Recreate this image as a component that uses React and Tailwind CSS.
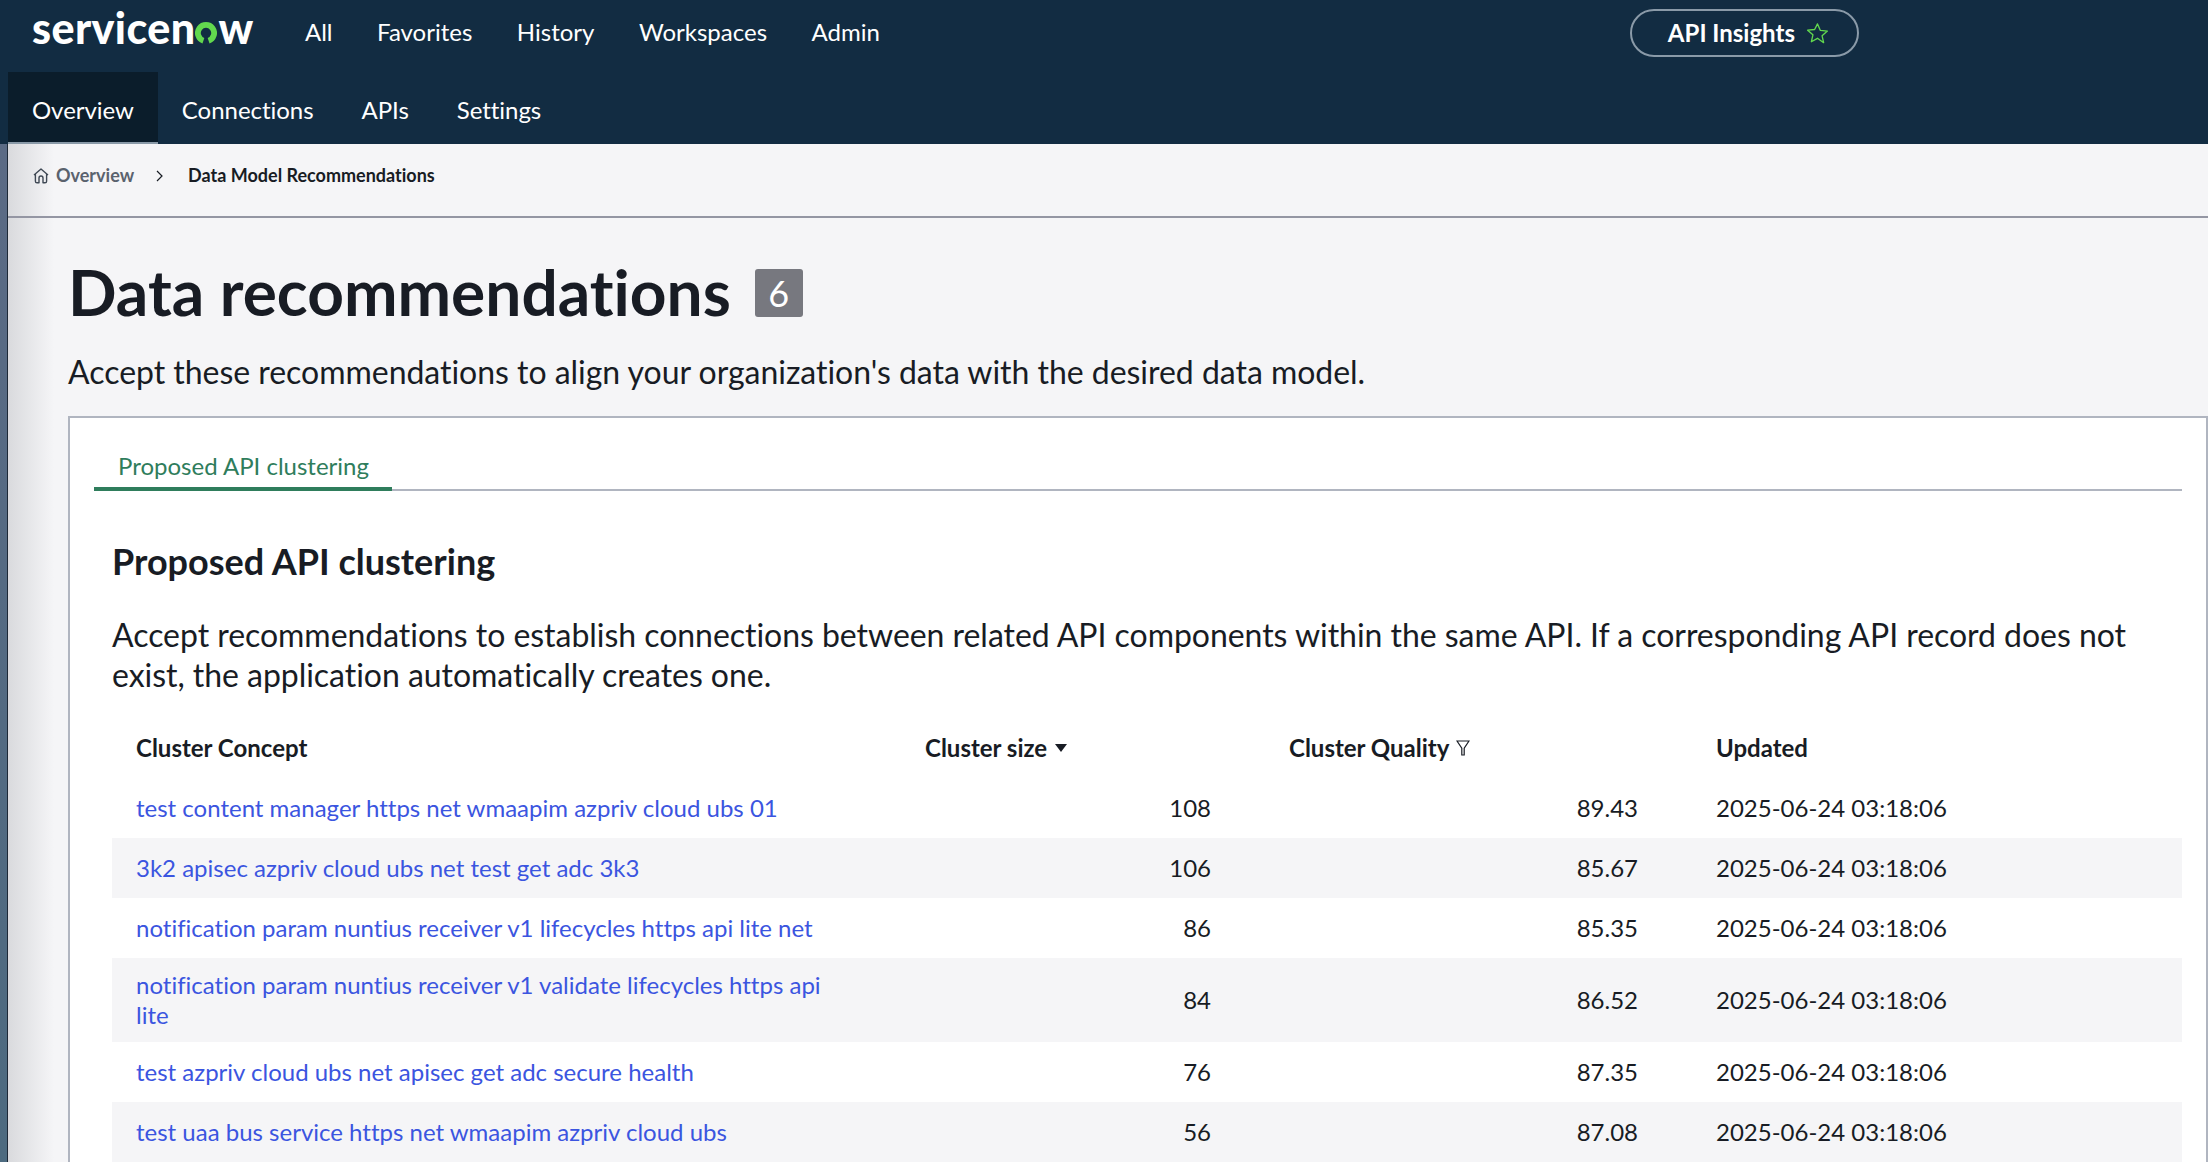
import React from "react";

const mainNav = ["All", "Favorites", "History", "Workspaces", "Admin"];
const subNav = ["Overview", "Connections", "APIs", "Settings"];

const rows = [
  { name: "test content manager https net wmaapim azpriv cloud ubs 01", size: 108, quality: "89.43" },
  { name: "3k2 apisec azpriv cloud ubs net test get adc 3k3", size: 106, quality: "85.67" },
  { name: "notification param nuntius receiver v1 lifecycles https api lite net", size: 86, quality: "85.35" },
  { name: "notification param nuntius receiver v1 validate lifecycles https api lite", size: 84, quality: "86.52" },
  { name: "test azpriv cloud ubs net apisec get adc secure health", size: 76, quality: "87.35" },
  { name: "test uaa bus service https net wmaapim azpriv cloud ubs", size: 56, quality: "87.08" },
];

function Logo() {
  return (
    <div className="flex items-baseline font-['Lato',sans-serif] text-[43px] leading-[44px] font-black tracking-[0.4px] text-white">
      <span>servicen</span>
      <svg viewBox="0 0 22 22" className="mr-[1px] mb-[6px] h-[22px] w-[22px] self-end">
        <path d="M8.4 18.7A8.1 8.1 0 1 1 13.6 18.7" fill="none" stroke="#62d84e" strokeWidth="5.8" />
      </svg>
      <span>w</span>
    </div>
  );
}

function HomeIcon() {
  return (
    <svg viewBox="0 0 16 16" className="h-4 w-4" fill="none" stroke="#3f4854" strokeWidth="1.4" strokeLinejoin="round">
      <path d="M1 7 8 1l7 6M2.4 6v7.2a1.6 1.6 0 0 0 1.6 1.6h2V10a2 2 0 0 1 4 0v4.8h2a1.6 1.6 0 0 0 1.6-1.6V6" />
    </svg>
  );
}

export default function App() {
  return (
    <div className="h-[1162px] w-[2208px] overflow-hidden bg-[#f5f5f7] font-['Lato',sans-serif] text-[#181c24] [font-variant-ligatures:none]">
      <header className="h-[144px] bg-[#122c42] text-white">
        <div className="flex h-[72px] items-start">
          <div className="mt-[6px] ml-[32px] w-[273px]">
            <Logo />
          </div>
          <nav className="flex gap-[44.5px] pt-[15px] text-[24px] leading-[34px]">
            {mainNav.map((item) => (
              <a key={item}>{item}</a>
            ))}
          </nav>
          <div className="mt-[9px] ml-[750px] flex h-[48px] w-[229px] items-center gap-[11px] rounded-full border-2 border-[#8a9aa8] pl-[36px] text-[24px] font-bold">
            API Insights
            <svg viewBox="0 0 24 24" className="h-[23px] w-[23px]" fill="none" stroke="#62d84e" strokeWidth="1.4" strokeLinejoin="round">
              <path d="M12 2l3 6.8 7.3.7-5.5 4.9 1.6 7.2L12 17l-6.4 3.6 1.6-7.2-5.5-4.9 7.3-.7z" />
            </svg>
          </div>
        </div>
        <nav className="ml-[8px] flex h-[72px] text-[24px] tracking-[-0.04px]">
          {subNav.map((item, i) => (
            <a
              key={item}
              className={
                i === 0
                  ? "flex items-center border-b-2 border-[#8a9aa8] bg-[#0b1d2b] px-6 pt-[5px]"
                  : "flex items-center px-6 pt-[3px]"
              }
            >
              {item}
            </a>
          ))}
        </nav>
      </header>

      <div className="flex h-[1018px]">
        <div className="w-[7px] bg-[linear-gradient(180deg,#5b6b85,#4d6b80)]"></div>
        <div className="w-[1px] bg-[#1e2a38]"></div>
        <main className="flex-1 bg-[linear-gradient(90deg,#d9dadd_0px,#f5f5f7_46px)]">
          <div className="flex h-[74px] items-center border-b-2 border-[#9496a3] pb-[9px] pl-[25px] text-[18px] font-medium">
            <HomeIcon />
            <span className="ml-[7px] font-bold text-[#5a626e]">Overview</span>
            <svg viewBox="0 0 10 14" className="ml-[21px] h-[14px] w-[10px]" fill="none" stroke="#181c24" strokeWidth="1.2">
              <path d="M2 2l5 5-5 5" />
            </svg>
            <span className="ml-[23px] font-bold">Data Model Recommendations</span>
          </div>

          <div className="pl-[60px]">
            <div className="flex items-center pt-[36px]">
              <h1 className="text-[64px] leading-[76px] font-bold">Data recommendations</h1>
              <span className="mt-[2px] ml-[24px] flex h-[48px] w-[48px] items-center justify-center rounded-[3px] bg-[#77787f] text-[36px] text-white">
                6
              </span>
            </div>
            <p className="mt-[22px] text-[32px] leading-[40px] tracking-[-0.03px]">
              Accept these recommendations to align your organization's data with the desired data model.
            </p>

            <section className="mt-[24px] h-[800px] border-2 border-[#b0b5c0] bg-white pt-[29px] pr-[24px] pl-[24px]">
              <div className="flex h-[44px] border-b-2 border-[#b0b5c0]">
                <div className="h-[44px] w-[298px] border-b-4 border-[#2f7d5c] pt-[2px] pl-[24px] text-[24px] leading-[34px] text-[#2f7d5c]">
                  Proposed API clustering
                </div>
              </div>

              <div className="pt-[47px]">
                <h2 className="pl-[18px] text-[36px] leading-[46px] font-bold">Proposed API clustering</h2>
                <p className="mt-[31px] pl-[18px] text-[32px] leading-[40px] tracking-[-0.04px]">
                  Accept recommendations to establish connections between related API components within the same API. If a corresponding API record does not exist, the application automatically creates one.
                </p>

                <table className="mt-[23px] ml-[18px] w-[2070px] table-fixed text-[24px] leading-[30px]">
                  <colgroup>
                    <col className="w-[789px]" />
                    <col className="w-[364px]" />
                    <col className="w-[427px]" />
                    <col className="w-[490px]" />
                  </colgroup>
                  <thead>
                    <tr className="h-[60px] text-left font-bold">
                      <th className="px-6">Cluster Concept</th>
                      <th className="px-6">
                        <span className="inline-flex items-center gap-[8px]">
                          Cluster size
                          <svg viewBox="0 0 12 8" className="h-[8px] w-[12px]" fill="#181c24">
                            <path d="M0 0h12L6 8z" />
                          </svg>
                        </span>
                      </th>
                      <th className="px-6">
                        <span className="inline-flex items-center gap-[7px]">
                          Cluster Quality
                          <svg viewBox="0 0 14 16" className="h-[16px] w-[14px]" fill="none" stroke="#181c24" strokeWidth="1.2">
                            <path d="M1 1h12L8.2 8.2v6.8H5.8V8.2z" />
                          </svg>
                        </span>
                      </th>
                      <th className="px-6">Updated</th>
                    </tr>
                  </thead>
                  <tbody>
                    {rows.map((row, i) => (
                      <tr key={row.name} className={i % 2 === 1 ? "h-[60px] bg-[#f5f5f7]" : "h-[60px]"}>
                        <td className="py-3 pr-[72px] pl-6 text-[#3b55e0]">{row.name}</td>
                        <td className="pr-[54px] text-right">{row.size}</td>
                        <td className="pr-[54px] text-right">{row.quality}</td>
                        <td className="px-6">2025-06-24 03:18:06</td>
                      </tr>
                    ))}
                  </tbody>
                </table>
              </div>
            </section>
          </div>
        </main>
      </div>
    </div>
  );
}
